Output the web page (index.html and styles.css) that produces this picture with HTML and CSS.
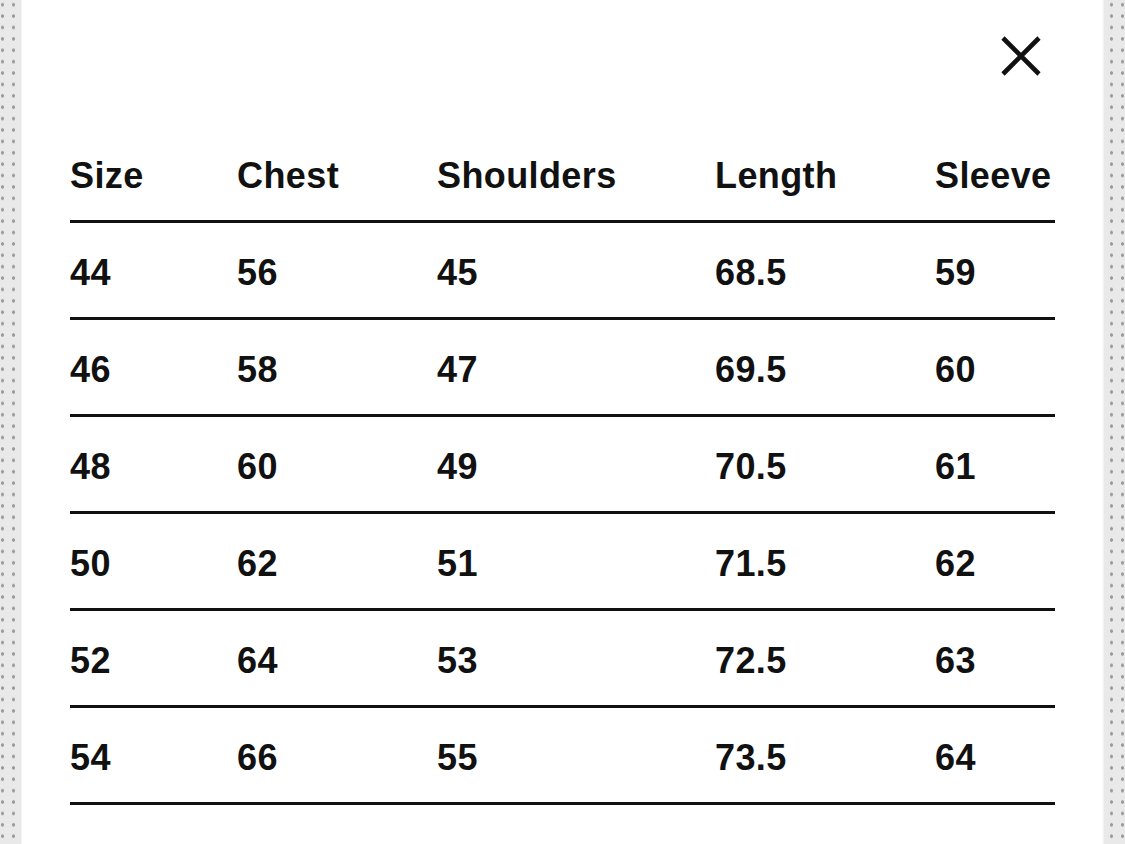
FILE: index.html
```html
<!DOCTYPE html>
<html lang="en">
<head>
<meta charset="utf-8">
<title>Size guide</title>
<link rel="stylesheet" href="styles.css">
</head>
<body>
<div class="page">
  <div class="strip strip-left"></div>
  <main class="panel">
    <div class="toolbar">
      <button class="close" aria-label="Close">
        <svg width="44" height="44" viewBox="0 0 44 44"><path d="M4 4 L40 40 M40 4 L4 40" stroke="#111" stroke-width="4.6" fill="none" stroke-linecap="butt"/></svg>
      </button>
    </div>
    <div class="table">
      <div class="row head"><span>Size</span><span>Chest</span><span>Shoulders</span><span>Length</span><span>Sleeve</span></div>
      <div class="row"><span>44</span><span>56</span><span>45</span><span>68.5</span><span>59</span></div>
      <div class="row"><span>46</span><span>58</span><span>47</span><span>69.5</span><span>60</span></div>
      <div class="row"><span>48</span><span>60</span><span>49</span><span>70.5</span><span>61</span></div>
      <div class="row"><span>50</span><span>62</span><span>51</span><span>71.5</span><span>62</span></div>
      <div class="row"><span>52</span><span>64</span><span>53</span><span>72.5</span><span>63</span></div>
      <div class="row"><span>54</span><span>66</span><span>55</span><span>73.5</span><span>64</span></div>
    </div>
  </main>
  <div class="strip strip-right"></div>
</div>
</body>
</html>
```
FILE: styles.css
```css
html, body {
  margin: 0;
  padding: 0;
  background: #fff;
  overflow: hidden;
}
.page {
  display: flex;
  height: 844px;
}
.strip {
  background-color: #e9e9e9;
  background-image: radial-gradient(circle, #9c9c9c 0 1.4px, transparent 1.9px);
  background-size: 11px 11.4px;
}
.strip-left {
  width: 21px;
  background-position: -3px -1px;
  border-right: 1px solid #f4f4f4;
}
.strip-right {
  width: 21px;
  border-left: 2px solid #f6f6f6;
  background-position: 2px -1px;
}
.panel {
  flex: 1;
  background: #fff;
  padding: 0 47px 0 48px;
}
.toolbar {
  display: flex;
  justify-content: flex-end;
  padding: 34px 12px 0 0;
  height: 44px;
}
.close {
  border: 0;
  background: none;
  padding: 0;
  width: 44px;
  height: 44px;
  display: block;
}
.close svg { display: block; }
.table {
  margin-top: 78px;
  font-family: "Liberation Sans", Arial, sans-serif;
  font-weight: 700;
  font-size: 36px;
  line-height: 40px;
  letter-spacing: 0.4px;
  color: #111;
}
.row {
  display: grid;
  grid-template-columns: 167px 200px 278px 220px 120px;
  padding: 30px 0 24px;
  border-bottom: 3px solid #111;
}
.row.head {
  padding: 0 0 24px;
}
```
